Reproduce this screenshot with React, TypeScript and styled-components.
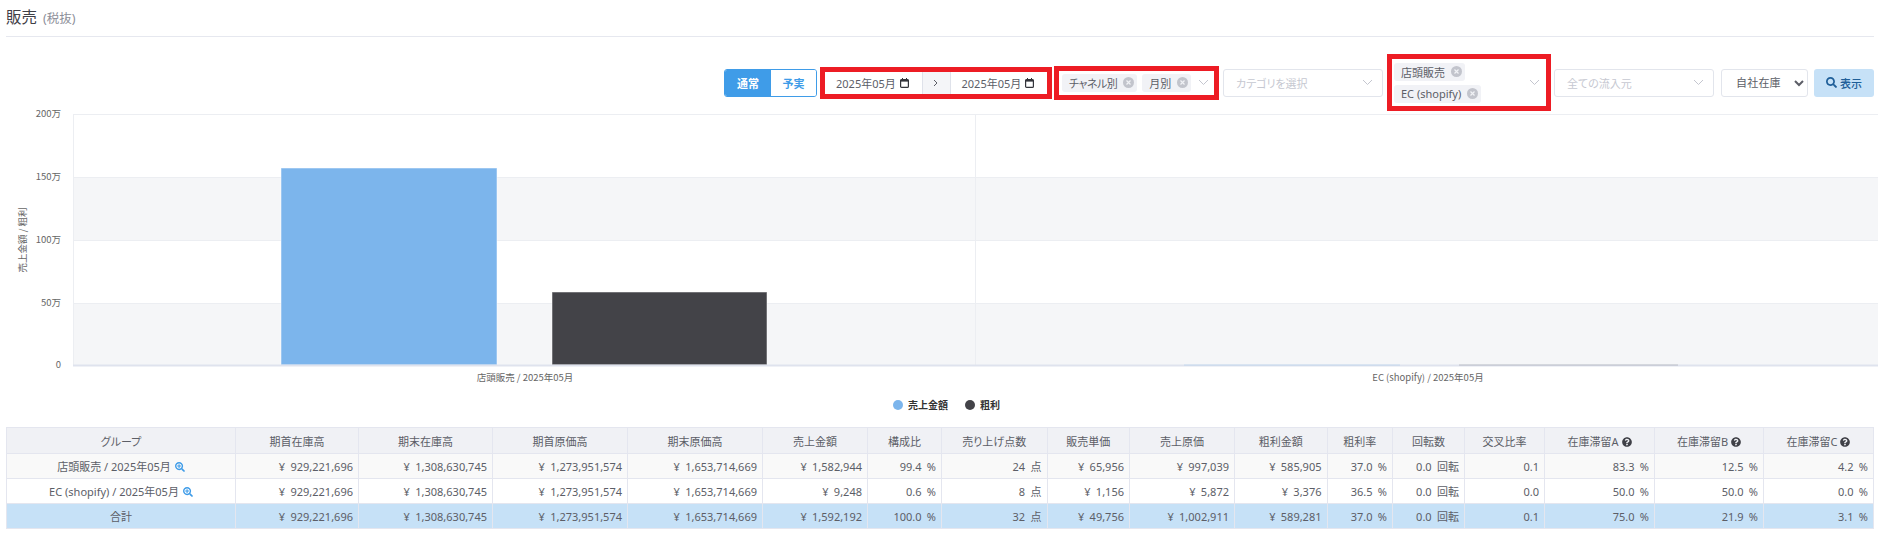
import React from "react";
import styled, { createGlobalStyle } from "styled-components";
import { FaSearch, FaSearchPlus, FaQuestionCircle } from "react-icons/fa";

const Global = createGlobalStyle`
  html, body { margin: 0; padding: 0; background: #fff; overflow: hidden; }
  body { font-family: "Noto Sans", "Noto Sans CJK JP", sans-serif; font-size: 11px; color: #5c5e67; font-feature-settings: "palt"; }
`;

const Page = styled.div`
  width: 1882px;
  height: 541px;
`;
const Header = styled.header`
  margin: 0 8px 0 6px;
  border-bottom: 1px solid #e6e8ef;
  display: flex;
  align-items: baseline;
  gap: 6px;
  padding-top: 5px;
  box-sizing: border-box;
  height: 37px;
`;
const Title = styled.h1`
  margin: 0;
  font-size: 15.5px;
  line-height: 24px;
  font-weight: 400;
  color: #3f4047;
`;
const Sub = styled.span`
  font-size: 12.5px;
  color: #8d8f99;
`;
const Toolbar = styled.div`
  height: 57px;
  margin-top: 17px;
  padding-right: 8px;
  display: flex;
  justify-content: flex-end;
  align-items: center;
`;
const Toggle = styled.div`
  display: flex;
  width: 93px;
  height: 28px;
  border: 1px solid #3f9ce8;
  border-radius: 3px;
  box-sizing: border-box;
  overflow: hidden;
`;
const ToggleItem = styled.div<{ $on?: boolean }>`
  flex: ${(p) => (p.$on ? "0 0 46px" : "1")};
  display: flex;
  align-items: center;
  justify-content: center;
  font-weight: 700;
  background: ${(p) => (p.$on ? "#3f9ce8" : "#fff")};
  color: ${(p) => (p.$on ? "#fff" : "#3f9ce8")};
`;
const Marked = styled.div<{ $w: number; $h: number; $ml: number }>`
  width: ${(p) => p.$w}px;
  height: ${(p) => p.$h}px;
  margin-left: ${(p) => p.$ml}px;
  border: 5px solid #ed1c24;
  box-sizing: border-box;
  flex: none;
  display: flex;
  align-items: center;
`;
const DateCell = styled.div`
  flex: 1;
  display: flex;
  align-items: center;
  gap: 4px;
  padding-left: 11px;
  color: #5c5e67;
`;
const DateArrow = styled.div`
  flex: 0 0 29px;
  align-self: stretch;
  display: flex;
  align-items: center;
  justify-content: center;
  background: #f4f5f8;
  border-left: 1px solid #dfe2ea;
  border-right: 1px solid #dfe2ea;
  box-sizing: border-box;
`;
const TagWrap = styled.div<{ $col?: boolean }>`
  flex: 1;
  display: flex;
  flex-direction: ${(p) => (p.$col ? "column" : "row")};
  align-items: flex-start;
  gap: ${(p) => (p.$col ? "4px" : "5px")};
  padding-left: ${(p) => (p.$col ? "2px" : "3px")};
`;
const Tag = styled.span<{ $tight?: boolean }>`
  display: inline-flex;
  align-items: center;
  height: 18px;
  border-radius: 3px;
  background: #f1f2f6;
  padding: 0 3px 0 7px;
  gap: 6px;
  color: #5c5e67;
  white-space: nowrap;
  letter-spacing: ${(p) => (p.$tight ? "-0.5px" : "0")};
`;
const TagX = styled.svg`
  width: 11px;
  height: 11px;
  flex: none;
`;
const Chevron = styled.svg<{ $mr: number }>`
  width: 11px;
  height: 7px;
  flex: none;
  margin-right: ${(p) => p.$mr}px;
`;
const CalIcon = styled.svg`
  width: 9px;
  height: 10px;
  flex: none;
`;
const Select = styled.div<{ $w: number; $ml: number }>`
  width: ${(p) => p.$w}px;
  height: 28px;
  margin-left: ${(p) => p.$ml}px;
  flex: none;
  box-sizing: border-box;
  border: 1px solid #e2e5ec;
  border-radius: 3px;
  padding: 0 7px 0 12px;
  display: flex;
  align-items: center;
  justify-content: space-between;
  color: #c6c8d1;
`;
const NativeSelect = styled.select`
  width: 87px;
  height: 28px;
  margin-left: 7px;
  flex: none;
  box-sizing: border-box;
  border: 1px solid #e2e5ec;
  border-radius: 3px;
  background: #fff;
  color: #5c5e67;
  padding: 0 0 0 10px;
  font-family: inherit;
  font-size: 11px;
  letter-spacing: 0.2px;
`;
const ShowButton = styled.button`
  width: 60px;
  height: 28px;
  margin-left: 6px;
  flex: none;
  border: none;
  border-radius: 3px;
  background: #c6e1f7;
  color: #1f5f99;
  font-family: inherit;
  font-size: 11px;
  font-weight: 500;
  display: flex;
  align-items: center;
  justify-content: center;
  gap: 3px;
  padding: 0;
`;
const Chart = styled.svg`
  display: block;
  width: 1882px;
  height: 316px;
  overflow: visible;
  font-family: "Noto Sans CJK JP", "Noto Sans", sans-serif;
  font-feature-settings: normal;
`;
const AxisText = styled.text`
  font-size: 9.5px;
  fill: #666;
`;
const LegendText = styled.text`
  font-size: 10px;
  font-weight: 700;
  fill: #333;
`;
const TableWrap = styled.div`
  margin-left: 6px;
`;
const Table = styled.table`
  width: 1867px;
  table-layout: fixed;
  border-collapse: collapse;
  border: 1px solid #e6e8ef;
`;
const ColW = styled.col<{ $w: number }>`
  width: ${(p) => p.$w}px;
`;
const Th = styled.th`
  height: 26px;
  padding: 0 5px;
  box-sizing: border-box;
  background: #f0f1f5;
  border: 1px solid #e4e6ef;
  font-weight: 400;
  text-align: center;
  white-space: nowrap;
  color: #5c5e67;
`;
const Tr = styled.tr<{ $kind: "odd" | "even" | "total" }>`
  background: ${(p) => (p.$kind === "odd" ? "#f9f9f9" : p.$kind === "even" ? "#fff" : "#c6e1f7")};
`;
const Td = styled.td<{ $center?: boolean }>`
  height: 25px;
  padding: 0 5px;
  box-sizing: border-box;
  border: 1px solid #e4e6ef;
  text-align: ${(p) => (p.$center ? "center" : "right")};
  word-spacing: ${(p) => (p.$center ? "0" : "2.5px")};
  white-space: nowrap;
  color: #5c5e67;
`;
const Zoom = styled(FaSearchPlus)`
  color: #3f9ce8;
  font-size: 10px;
  margin-left: 4px;
  vertical-align: -1px;
`;
const Help = styled(FaQuestionCircle)`
  color: #3f4047;
  font-size: 10px;
  margin-left: 3px;
  vertical-align: -1px;
`;

const Cal = () => (
  <CalIcon viewBox="0 0 9 10">
    <rect x="0.6" y="1.6" width="7.8" height="7.8" rx="1" fill="none" stroke="#33343a" strokeWidth="1.2" />
    <rect x="0.6" y="1.6" width="7.8" height="2" fill="#33343a" />
    <rect x="2" y="0" width="1" height="2" fill="#33343a" />
    <rect x="6" y="0" width="1" height="2" fill="#33343a" />
  </CalIcon>
);
const Remove = () => (
  <TagX viewBox="0 0 11 11">
    <circle cx="5.5" cy="5.5" r="5.5" fill="#c2c4cc" />
    <path d="M3.5 3.5l4 4M7.5 3.5l-4 4" stroke="#f1f2f6" strokeWidth="1.2" />
  </TagX>
);
const Down = ({ mr = 0 }: { mr?: number }) => (
  <Chevron $mr={mr} viewBox="0 0 11 7">
    <path d="M1 1l4.5 4.5L10 1" fill="none" stroke="#c4c6cf" strokeWidth="1" />
  </Chevron>
);

const cols = [229, 123, 134, 135, 135, 105, 74, 105.5, 82.5, 105, 92.5, 65.5, 72, 80, 110, 109, 110];
const heads = ["グループ", "期首在庫高", "期末在庫高", "期首原価高", "期末原価高", "売上金額", "構成比", "売り上げ点数", "販売単価", "売上原価", "粗利金額", "粗利率", "回転数", "交叉比率", "在庫滞留A", "在庫滞留B", "在庫滞留C"];
const stock = ["¥ 929,221,696", "¥ 1,308,630,745", "¥ 1,273,951,574", "¥ 1,653,714,669"];
const rows: { kind: "odd" | "even" | "total"; name: string; zoom: boolean; cells: string[] }[] = [
  { kind: "odd", name: "店頭販売 / 2025年05月", zoom: true, cells: [...stock, "¥ 1,582,944", "99.4 %", "24 点", "¥ 65,956", "¥ 997,039", "¥ 585,905", "37.0 %", "0.0 回転", "0.1", "83.3 %", "12.5 %", "4.2 %"] },
  { kind: "even", name: "EC (shopify) / 2025年05月", zoom: true, cells: [...stock, "¥ 9,248", "0.6 %", "8 点", "¥ 1,156", "¥ 5,872", "¥ 3,376", "36.5 %", "0.0 回転", "0.0", "50.0 %", "50.0 %", "0.0 %"] },
  { kind: "total", name: "合計", zoom: false, cells: [...stock, "¥ 1,592,192", "100.0 %", "32 点", "¥ 49,756", "¥ 1,002,911", "¥ 589,281", "37.0 %", "0.0 回転", "0.1", "75.0 %", "21.9 %", "3.1 %"] },
];

const ticks = [
  { y: 114, t: "200万" },
  { y: 177, t: "150万" },
  { y: 240, t: "100万" },
  { y: 303, t: "50万" },
  { y: 365, t: "0" },
];

export default function App() {
  return (
    <Page>
      <Global />
      <Header>
        <Title>販売</Title>
        <Sub>(税抜)</Sub>
      </Header>
      <Toolbar>
        <Toggle>
          <ToggleItem $on>通常</ToggleItem>
          <ToggleItem>予実</ToggleItem>
        </Toggle>
        <Marked $w={232} $h={32} $ml={3}>
          <DateCell>2025年05月<Cal /></DateCell>
          <DateArrow>
            <svg width="6" height="8" viewBox="0 0 6 8"><path d="M1 1l3 3-3 3" fill="none" stroke="#5c5e67" /></svg>
          </DateArrow>
          <DateCell>2025年05月<Cal /></DateCell>
        </Marked>
        <Marked $w={165} $h={34} $ml={2}>
          <TagWrap>
            <Tag $tight>チャネル別<Remove /></Tag>
            <Tag>月別<Remove /></Tag>
          </TagWrap>
          <Down mr={5} />
        </Marked>
        <Select $w={160} $ml={4}>
          カテゴリを選択
          <Down mr={2} />
        </Select>
        <Marked $w={164} $h={57} $ml={4}>
          <TagWrap $col>
            <Tag>店頭販売<Remove /></Tag>
            <Tag>EC (shopify)<Remove /></Tag>
          </TagWrap>
          <Down mr={6} />
        </Marked>
        <Select $w={160} $ml={3}>
          全ての流入元
          <Down mr={2} />
        </Select>
        <NativeSelect defaultValue="own">
          <option value="own">自社在庫</option>
        </NativeSelect>
        <ShowButton>
          <FaSearch size={11} />
          表示
        </ShowButton>
      </Toolbar>
      <Chart viewBox="0 111 1882 316">
        <rect x="73" y="177" width="1805" height="63" fill="#f5f6f8" />
        <rect x="73" y="303" width="1805" height="62" fill="#f5f6f8" />
        {ticks.map((t) => (
          <line key={t.y} x1="73" x2="1878" y1={t.y + 0.5} y2={t.y + 0.5} stroke="#eceef2" />
        ))}
        <line x1="73.5" x2="73.5" y1="114" y2="365" stroke="#eceef2" />
        <line x1="975.5" x2="975.5" y1="114" y2="365" stroke="#eceef2" />
        <rect x="281" y="168" width="216" height="197" fill="#7cb5ec" stroke="#fff" strokeOpacity="0.5" />
        <rect x="552" y="292" width="215" height="73" fill="#434348" stroke="#fff" strokeOpacity="0.5" />
        <line x1="73" x2="1878" y1="365.5" y2="365.5" stroke="#dfe3ee" strokeWidth="2" />
        <line x1="1184" x2="1400" y1="365" y2="365" stroke="#7cb5ec" strokeOpacity="0.3" />
        <line x1="1459" x2="1678" y1="365" y2="365" stroke="#434348" strokeOpacity="0.25" />
        {ticks.map((t) => (
          <AxisText key={t.y} x="61" y={t.y + 3} textAnchor="end">{t.t}</AxisText>
        ))}
        <AxisText x="0" y="0" textAnchor="middle" transform="translate(26 240) rotate(-90)">売上金額 / 粗利</AxisText>
        <AxisText x="525" y="381" textAnchor="middle">店頭販売 / 2025年05月</AxisText>
        <AxisText x="1428" y="381" textAnchor="middle">EC (shopify) / 2025年05月</AxisText>
        <circle cx="898" cy="405" r="5" fill="#7cb5ec" />
        <LegendText x="908" y="408.5">売上金額</LegendText>
        <circle cx="970" cy="405" r="5" fill="#434348" />
        <LegendText x="980" y="408.5">粗利</LegendText>
      </Chart>
      <TableWrap>
        <Table>
          <colgroup>
            {cols.map((w, i) => (
              <ColW key={i} $w={w} />
            ))}
          </colgroup>
          <thead>
            <tr>
              {heads.map((h, i) => (
                <Th key={h}>
                  {h}
                  {i >= 14 && <Help />}
                </Th>
              ))}
            </tr>
          </thead>
          <tbody>
            {rows.map((r) => (
              <Tr key={r.name} $kind={r.kind}>
                <Td $center>
                  {r.name}
                  {r.zoom && <Zoom />}
                </Td>
                {r.cells.map((c, i) => (
                  <Td key={i}>{c}</Td>
                ))}
              </Tr>
            ))}
          </tbody>
        </Table>
      </TableWrap>
    </Page>
  );
}
